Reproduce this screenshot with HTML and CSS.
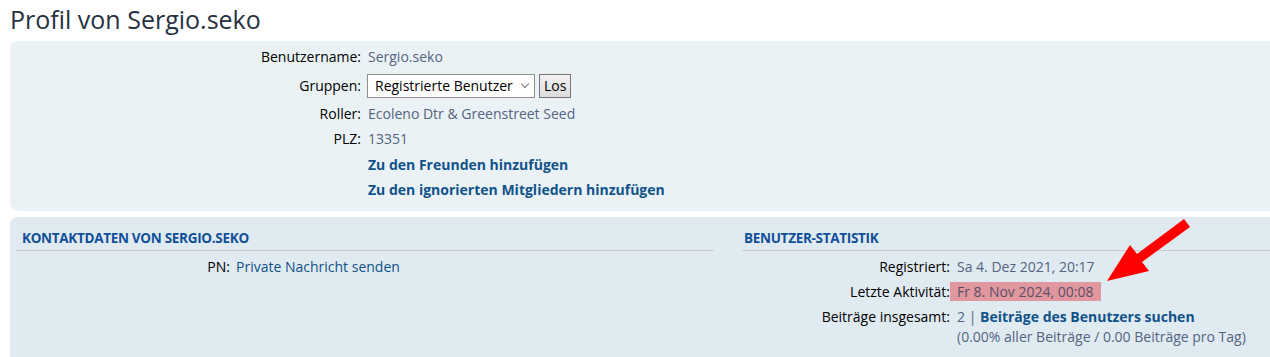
FILE: index.html
```html
<!DOCTYPE html>
<html lang="de">
<head>
    <meta charset="UTF-8">
    <title>Profil von Sergio.seko</title>
    <link rel="stylesheet" href="styles.css">
</head>
<body>
    <div class="page">
        <h2 class="title">Profil von Sergio.seko</h2>

        <!-- Profile head -->
        <div class="panel bg1">
            <dl class="details top">
                <dt>Benutzername:</dt>
                <dd><span class="val">Sergio.seko</span></dd>

                <dt class="tall">Gruppen:</dt>
                <dd class="tall">
                    <span class="select">Registrierte Benutzer<span class="chev"></span></span>
                    <button class="btn">Los</button>
                </dd>

                <dt>Roller:</dt>
                <dd><span class="val">Ecoleno Dtr &amp; Greenstreet Seed</span></dd>

                <dt>PLZ:</dt>
                <dd><span class="val">13351</span></dd>

                <dt></dt>
                <dd><a href="#" class="strong">Zu den Freunden hinzufügen</a></dd>

                <dt></dt>
                <dd><a href="#" class="strong">Zu den ignorierten Mitgliedern hinzufügen</a></dd>
            </dl>
        </div>

        <!-- Contact + stats -->
        <div class="panel bg2 cols">
            <div class="column left">
                <h3>Kontaktdaten von Sergio.seko</h3>
                <dl class="details contact">
                    <dt>PN:</dt>
                    <dd><a href="#">Private Nachricht senden</a></dd>
                </dl>
            </div>
            <div class="column right">
                <h3>Benutzer-Statistik</h3>
                <dl class="details stats">
                    <dt>Registriert:</dt>
                    <dd><span class="val">Sa 4. Dez 2021, 20:17</span></dd>

                    <dt>Letzte Aktivität:</dt>
                    <dd><span class="val mark">Fr 8. Nov 2024, 00:08</span></dd>

                    <dt>Beiträge insgesamt:</dt>
                    <dd>
                        <span class="val">2 | </span><a href="#" class="strong">Beiträge des Benutzers suchen</a><br>
                        <span class="val">(0.00% aller Beiträge / 0.00 Beiträge pro Tag)</span>
                    </dd>

                    <dt class="next">Am aktivsten in Forum:</dt>
                    <dd class="next"><a href="#" class="strong">Allgemeines</a></dd>
                </dl>
            </div>
        </div>
    </div>

    <!-- annotation arrow drawn over the screenshot -->
    <svg class="arrow" width="1270" height="357" viewBox="0 0 1270 357">
        <polygon fill="#ff0000" points="1184,219 1190,227 1142,262 1149,271 1107,281 1130,245 1137,254"/>
    </svg>
</body>
</html>
```

FILE: styles.css
```css
html {
    overflow: hidden;
}

body {
    margin: 0;
    font-family: "Open Sans", "Noto Sans", sans-serif;
    font-size: 14px;
    color: #000;
    background: #fff;
    position: relative;
}

.page {
    padding: 0 0 0 10px;
    width: 1300px;
}

.title {
    margin: 0 0 6px 0;
    padding-top: 4px;
    font-size: 25px;
    line-height: 31px;
    font-weight: normal;
    color: #28313f;
}

.panel {
    border-radius: 8px;
    margin-bottom: 6px;
}

.bg1 {
    background-color: #ebf2f5;
    padding: 6px 0 12px 0;
}

.bg2 {
    background-color: #e0eaf1;
    padding: 12px 0 20px 6px;
}

/* label / value rows */
.details {
    display: grid;
    row-gap: 5px;
    column-gap: 7px;
    margin: 0;
    line-height: 20px;
}

.details dt {
    text-align: right;
}

.details dd {
    margin: 0;
}

.details.top {
    grid-template-columns: 351px auto;
}

.details.top dd a {
    position: relative;
    top: 1px;
}

.details.contact {
    grid-template-columns: 214px auto;
    column-gap: 6px;
}

.details.stats {
    grid-template-columns: 208px auto;
}

.details .next {
    margin-top: 1px;
}

.tall {
    height: 27px;
    display: flex;
    align-items: center;
    justify-content: flex-end;
}

dd.tall {
    justify-content: flex-start;
    gap: 4px;
}

.val {
    color: #536482;
}

a {
    color: #105289;
    text-decoration: none;
}

a.strong {
    font-weight: bold;
}

.mark {
    background-color: #e0979d;
    color: #5b5068;
    padding: 0 8px 0 7px;
    margin-left: -7px;
}

/* form controls */
.select {
    display: inline-flex;
    align-items: center;
    justify-content: space-between;
    box-sizing: border-box;
    width: 168px;
    height: 24px;
    padding: 0 6px 0 7px;
    margin-left: -1px;
    background: #fff;
    border: 1px solid #8f8f8f;
    color: #000;
}

.chev {
    width: 5px;
    height: 5px;
    border-right: 1px solid #777;
    border-bottom: 1px solid #777;
    transform: rotate(45deg);
    margin-top: -4px;
}

.btn {
    font-family: inherit;
    font-size: 14px;
    height: 24px;
    padding: 0 4px;
    border: 1px solid #767676;
    background: linear-gradient(#f2f2f2, #dcdcdc);
    color: #000;
}

/* two column section */
.cols {
    display: flex;
    gap: 28px;
}

.column.left {
    width: 698px;
}

.column.right {
    flex: 1;
}

.column h3 {
    margin: 0 0 6px 0;
    padding: 0 0 3px 6px;
    font-size: 13.5px;
    line-height: 18px;
    font-weight: bold;
    text-transform: uppercase;
    color: #115098;
    border-bottom: 1px solid #cccccc;
    letter-spacing: -0.3px;
}

.column.right h3 {
    padding-left: 2px;
}

.arrow {
    position: absolute;
    top: 0;
    left: 0;
    pointer-events: none;
}
```
